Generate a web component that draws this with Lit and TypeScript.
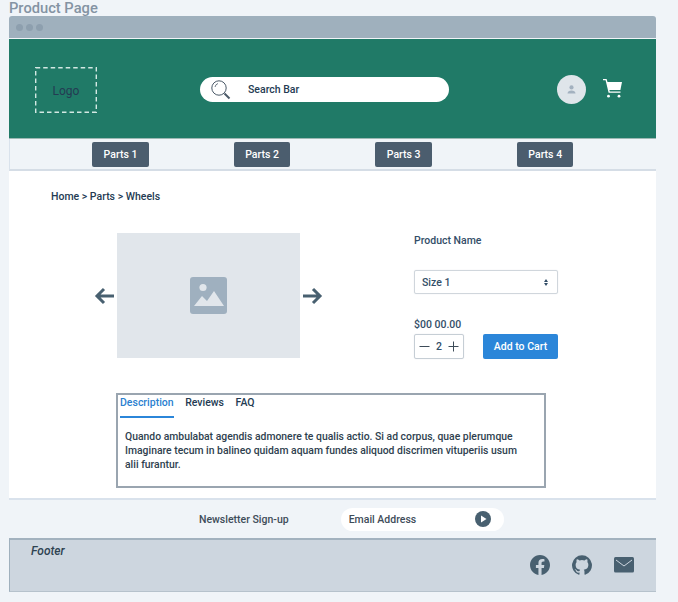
import { LitElement, html, css } from 'lit';
import { customElement } from 'lit/decorators.js';

const parts = ['Parts 1', 'Parts 2', 'Parts 3', 'Parts 4'];

@customElement('app-root')
export class AppRoot extends LitElement {
  static override styles = css`
    :host {
      display: block;
      height: 602px;
      overflow: hidden;
      background: #f0f4f8;
      font-family: Roboto, 'Noto Sans', sans-serif;
      font-size: 10.5px;
      font-weight: 500;
      color: #334e68;
    }

    .page-title {
      height: 16px;
      padding-left: 9px;
      font-size: 14.7px;
      line-height: 17px;
      font-weight: 500;
      color: #8493a3;
    }

    .frame {
      width: 647px;
      margin-left: 9px;
    }

    .titlebar {
      height: 22px;
      background: #9fb0bd;
      border-radius: 3px 3px 0 0;
      margin-bottom: 1px;
      display: flex;
      align-items: center;
      gap: 3px;
      padding-left: 7px;
    }

    .dot {
      width: 7px;
      height: 7px;
      border-radius: 50%;
      background: #8d9fae;
    }

    .header {
      height: 97px;
      padding-top: 2px;
      background: #207a67;
      display: flex;
      align-items: center;
      border-bottom: 1px solid #9db8b4;
    }

    .logo {
      position: relative;
      width: 62px;
      height: 43px;
      padding-top: 3px;
      margin-left: 26px;
      display: flex;
      align-items: center;
      justify-content: center;
      color: #243b53;
      font-size: 12px;
      font-weight: 400;
    }

    .logo svg {
      position: absolute;
      inset: 0;
    }

    .search {
      width: 249px;
      height: 25px;
      margin-left: 103px;
      background: #fff;
      border-radius: 13px;
      display: flex;
      align-items: center;
      color: #243b53;
    }

    .search svg {
      margin-left: 10px;
      width: 21px;
      height: 22px;
    }

    .search span {
      margin-left: 17px;
    }

    .avatar {
      width: 29px;
      height: 29px;
      margin-left: 108px;
      border-radius: 50%;
      background: #dfe5ea;
      display: flex;
      align-items: center;
      justify-content: center;
    }

    .cart {
      width: 21px;
      height: 21px;
      margin: -2px 0 0 16px;
    }

    .nav {
      height: 32px;
      box-sizing: border-box;
      padding: 1px 0 0 82.3px;
      background: #f0f4f8;
      border-left: 1px solid #d9e2ec;
      border-bottom: 2px solid #d5dde6;
      display: flex;
      align-items: center;
      gap: 85.2px;
    }

    .nav button {
      width: 56.4px;
      height: 25px;
      padding: 0;
      border: none;
      border-radius: 2px;
      background: #4b5d6e;
      color: #fff;
      font: inherit;
      font-weight: 500;
    }

    .main {
      height: 327px;
      background: #fff;
      display: flex;
      flex-direction: column;
    }

    .crumbs {
      padding: 19px 0 0 42px;
      line-height: 13px;
      color: #243b53;
    }

    .product {
      margin-top: 30px;
      display: flex;
      align-items: flex-start;
      padding-left: 85px;
    }

    .gallery {
      display: flex;
      align-items: center;
    }

    .arrow {
      width: 21px;
      height: 18px;
      flex: none;
    }

    .picture {
      width: 183px;
      height: 125px;
      margin: 0 2px;
      background: #e1e6eb;
      display: flex;
      align-items: center;
      justify-content: center;
    }

    .details {
      margin-left: 91px;
      width: 144px;
      color: #334e68;
    }

    .name {
      line-height: 14px;
      margin-top: 1px;
    }

    .select {
      margin-top: 22px;
      width: 144px;
      height: 24px;
      box-sizing: border-box;
      border: 1px solid #d0d6dc;
      box-shadow: 0 0 1px #d0d6dc;
      border-radius: 2px;
      display: flex;
      align-items: center;
      justify-content: space-between;
      padding: 0 9px 0 7px;
    }

    .updown {
      display: flex;
      flex-direction: column;
      gap: 1px;
    }

    .updown svg {
      display: block;
    }

    .price {
      margin-top: 24px;
      line-height: 14px;
    }

    .buy {
      display: flex;
      justify-content: space-between;
      margin-top: 2px;
    }

    .qty {
      width: 50px;
      height: 25px;
      box-sizing: border-box;
      border: 1px solid #c6ced5;
      box-shadow: 0 0 1px #d0d6dc;
      border-radius: 2px;
      display: flex;
      align-items: center;
      justify-content: space-between;
      padding: 0 4px;
    }

    .add {
      width: 75px;
      height: 25px;
      border: none;
      padding: 0;
      border-radius: 2px;
      background: #2b86d9;
      color: #fff;
      font: inherit;
      font-weight: 500;
    }

    .tabs {
      margin: 34px 0 0 107px;
      width: 430px;
      height: 95px;
      box-sizing: border-box;
      border: 2px solid #9aa5b0;
      padding: 0 8px 0 2px;
    }

    .tablist {
      display: flex;
      gap: 11.5px;
      height: 22px;
      line-height: 15px;
      color: #243b53;
    }

    .tablist span.active {
      color: #2b7fd0;
      border-bottom: 2px solid #2b86d9;
      height: 21px;
    }

    .tabs p {
      margin: 13px 14px 0 5px;
      font-size: 10.4px;
      line-height: 14px;
      color: #2f3f4f;
    }

    .newsletter {
      height: 40px;
      box-sizing: border-box;
      border-top: 2px solid #d9e2ec;
      background: #f0f4f8;
      display: flex;
      align-items: center;
    }

    .newsletter .label {
      margin-left: 190px;
      color: #3e4c59;
    }

    .email {
      width: 163px;
      height: 23px;
      margin-left: 52px;
      box-sizing: border-box;
      padding: 0 13px 0 8px;
      background: #fff;
      border-radius: 12px;
      display: flex;
      align-items: center;
      justify-content: space-between;
      color: #3e4c59;
    }

    .footer {
      height: 54px;
      box-sizing: border-box;
      background: #cdd6df;
      border-top: 2px solid #a3b2bf;
      border-left: 1px solid #9fb0bd;
      border-bottom: 1px solid #b6c2cc;
      display: flex;
      justify-content: space-between;
      padding: 4px 22px 0 21px;
    }

    .footer em {
      line-height: 15px;
      font-size: 12px;
      font-weight: 500;
      color: #2f4352;
    }

    .social {
      display: flex;
      gap: 22px;
      padding-top: 11px;
      color: #486070;
    }

    .social svg {
      width: 20px;
      height: 20px;
      display: block;
    }
  `;

  override render() {
    return html`
      <div class="page-title">Product Page</div>
      <div class="frame">
        <div class="titlebar">
          <span class="dot"></span><span class="dot"></span><span class="dot"></span>
        </div>
        <header class="header">
          <div class="logo">
            <svg width="62" height="46" viewBox="0 0 62 46" fill="none">
              <rect x="0.7" y="0.7" width="60.6" height="44.6" stroke="#d3e8e3" stroke-width="1.4" stroke-dasharray="4.5 3" />
            </svg>
            Logo
          </div>
          <div class="search">
            <svg viewBox="0 0 21 22" fill="none" stroke="#4b5a68">
              <circle cx="9" cy="9" r="7.2" stroke-width="1" />
              <path d="M5 8a4.5 4.5 0 0 1 3-3.5" stroke-width="0.8" />
              <path d="M14.5 14.5l5 5" stroke-width="2" />
            </svg>
            <span>Search Bar</span>
          </div>
          <div class="avatar">
            <svg width="9" height="9" viewBox="0 0 9 9" fill="#a3b1bf">
              <circle cx="4.5" cy="2.4" r="2.1" />
              <path d="M0.5 8.6c0-2 1.8-3 4-3s4 1 4 3z" />
            </svg>
          </div>
          <svg class="cart" viewBox="0 0 21 21" fill="#fff">
            <path d="M1 1h3.6l.9 3H20l-1.6 8H7.4l.4 1.6h10.7v1.2H6.6L3.6 2.3H1z" />
            <circle cx="6.5" cy="18.2" r="1.4" />
            <circle cx="17" cy="18.2" r="1.4" />
          </svg>
        </header>
        <nav class="nav">
          ${parts.map((p) => html`<button>${p}</button>`)}
        </nav>
        <main class="main">
          <div class="crumbs">Home &gt; Parts &gt; Wheels</div>
          <section class="product">
            <div class="gallery">
              <svg class="arrow" viewBox="0 0 21 18" fill="none" stroke="#486070" stroke-width="3">
                <path d="M20 9H3M10 2L3 9l7 7" />
              </svg>
              <div class="picture">
                <svg width="37" height="37" viewBox="0 0 37 37">
                  <rect width="37" height="37" rx="3" fill="#9fb0bf" />
                  <circle cx="13" cy="10.5" r="3.6" fill="#e1e6eb" />
                  <path d="M4 29l8-10 5 5 7-10 10 15z" fill="#e1e6eb" />
                </svg>
              </div>
              <svg class="arrow" viewBox="0 0 21 18" fill="none" stroke="#486070" stroke-width="3">
                <path d="M1 9h17M11 2l7 7-7 7" />
              </svg>
            </div>
            <div class="details">
              <div class="name">Product Name</div>
              <div class="select">
                <span>Size 1</span>
                <span class="updown">
                  <svg width="4" height="3" viewBox="0 0 4 3" fill="#334e68"><path d="M2 0l2 3H0z" /></svg>
                  <svg width="4" height="3" viewBox="0 0 4 3" fill="#334e68"><path d="M2 3L0 0h4z" /></svg>
                </span>
              </div>
              <div class="price">$00 00.00</div>
              <div class="buy">
                <div class="qty">
                  <svg width="11" height="11" viewBox="0 0 11 11" stroke="#3e4c59"><path d="M0.5 5.5h10" /></svg>
                  <span>2</span>
                  <svg width="11" height="11" viewBox="0 0 11 11" stroke="#3e4c59"><path d="M0.5 5.5h10M5.5 0.5v10" /></svg>
                </div>
                <button class="add">Add to Cart</button>
              </div>
            </div>
          </section>
          <section class="tabs">
            <div class="tablist">
              <span class="active">Description</span>
              <span>Reviews</span>
              <span>FAQ</span>
            </div>
            <p>
              Quando ambulabat agendis admonere te qualis actio. Si ad corpus, quae plerumque
              Imaginare tecum in balineo quidam aquam fundes aliquod discrimen vituperiis usum
              alii furantur.
            </p>
          </section>
        </main>
        <section class="newsletter">
          <span class="label">Newsletter Sign-up</span>
          <div class="email">
            <span>Email Address</span>
            <svg width="16" height="16" viewBox="0 0 16 16">
              <circle cx="8" cy="8" r="8" fill="#486070" />
              <path d="M6 4.5L11.5 8 6 11.5z" fill="#fff" />
            </svg>
          </div>
        </section>
        <footer class="footer">
          <em>Footer</em>
          <div class="social">
            <svg viewBox="0 0 24 24" fill="currentColor">
              <path d="M24 12.07C24 5.41 18.63 0 12 0S0 5.41 0 12.07c0 6.02 4.39 11 10.13 11.93v-8.44H7.08v-3.49h3.05V9.41c0-3.02 1.79-4.69 4.53-4.69 1.31 0 2.68.24 2.68.24v2.96h-1.51c-1.49 0-1.96.93-1.96 1.89v2.26h3.33l-.53 3.49h-2.8V24C19.61 23.07 24 18.09 24 12.07z" />
            </svg>
            <svg viewBox="0 0 24 24" fill="currentColor">
              <path d="M12 .3a12 12 0 0 0-3.8 23.38c.6.11.82-.26.82-.58v-2.03c-3.34.72-4.04-1.61-4.04-1.61-.55-1.39-1.33-1.76-1.33-1.76-1.09-.74.08-.73.08-.73 1.2.09 1.84 1.24 1.84 1.24 1.07 1.83 2.8 1.3 3.49 1 .1-.78.42-1.31.76-1.61-2.67-.3-5.47-1.33-5.47-5.93 0-1.31.47-2.38 1.24-3.22-.14-.3-.54-1.52.1-3.18 0 0 1-.32 3.3 1.23a11.5 11.5 0 0 1 6 0c2.28-1.55 3.29-1.23 3.29-1.23.64 1.66.24 2.88.12 3.18a4.65 4.65 0 0 1 1.23 3.22c0 4.61-2.8 5.63-5.48 5.92.42.36.81 1.1.81 2.22v3.29c0 .32.22.7.82.58A12 12 0 0 0 12 .3" />
            </svg>
            <svg viewBox="0 0 20 20">
              <rect x="0" y="2" width="20" height="15.5" rx="1.5" fill="currentColor" />
              <path d="M2 5l8 6 8-6" fill="none" stroke="#cdd6df" stroke-width="1" />
            </svg>
          </div>
        </footer>
      </div>
    `;
  }
}
